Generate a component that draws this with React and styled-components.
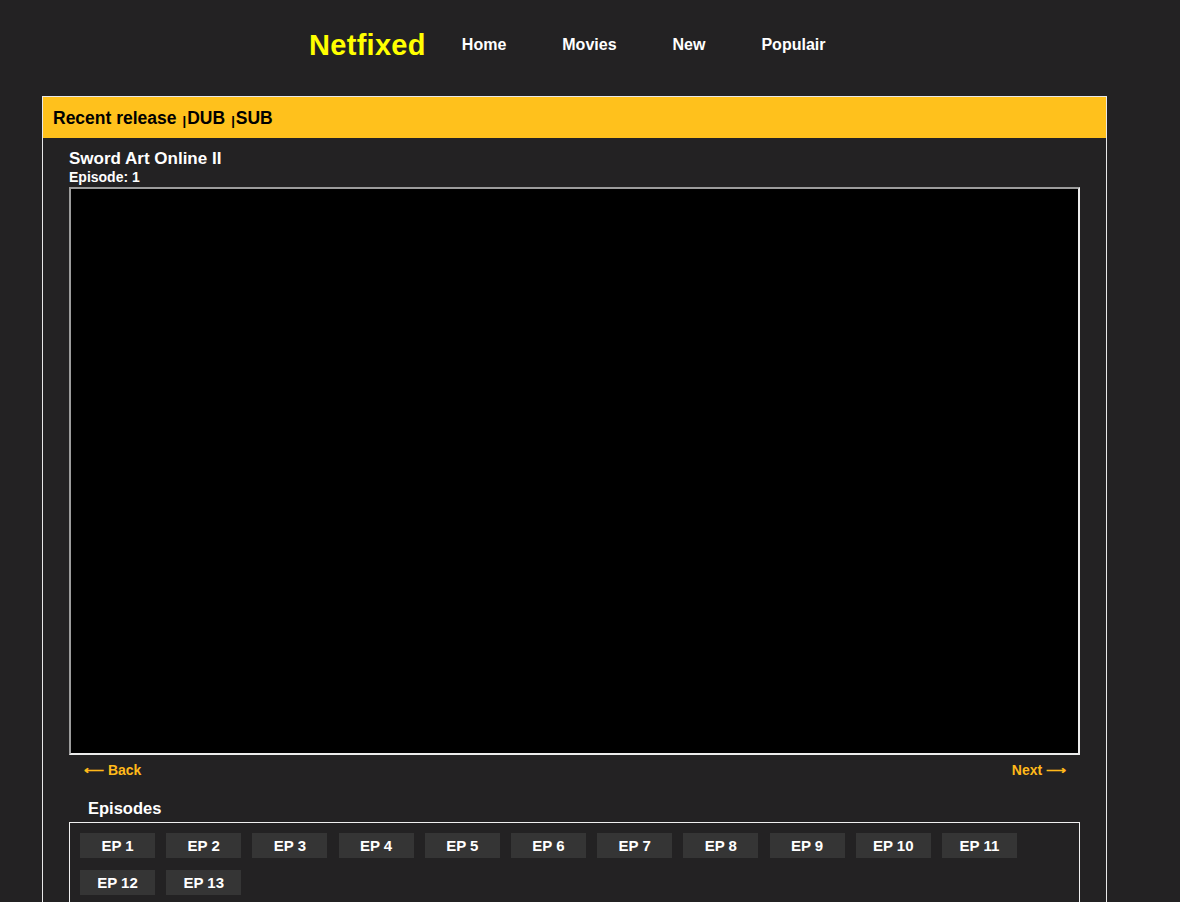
import React from "react";
import styled, { createGlobalStyle } from "styled-components";

const Global = createGlobalStyle`
  html, body { margin: 0; padding: 0; background: #232223; }
  body { font-family: "Liberation Sans", Arial, sans-serif; color: #fff; }
  * { box-sizing: border-box; }
`;

const Header = styled.header`
  display: flex;
  align-items: center;
  height: 90px;
  padding-left: 309px;
`;

const Logo = styled.div`
  color: #ffff00;
  font-size: 29px;
  font-weight: bold;
  margin-right: 36px;
  letter-spacing: 0.3px;
`;

const Nav = styled.nav`
  display: flex;
  gap: 56px;
`;

const NavLink = styled.a`
  color: #fff;
  font-size: 16px;
  font-weight: bold;
  text-decoration: none;
`;

const Panel = styled.section`
  margin: 6px 0 0 42px;
  width: 1065px;
  border: 1px solid #e8e8e8;
  border-bottom: none;
`;

const Bar = styled.div`
  background: #ffc11c;
  height: 41px;
  display: flex;
  align-items: center;
  padding-left: 10px;
  padding-top: 2px;
  color: #000;
  font-size: 17.5px;
  font-weight: bold;
`;

const Pipe = styled.span`
  font-size: 13px;
  margin: 4px 1px 0 6px;
`;

const Body = styled.div`
  padding: 11px 26px 0;
`;

const Title = styled.h2`
  margin: 0;
  font-size: 17px;
  line-height: 20px;
`;

const Sub = styled.div`
  font-size: 14px;
  font-weight: bold;
  line-height: 16px;
  margin-bottom: 2px;
`;

const Video = styled.div`
  height: 568px;
  background: #000;
  border: 2px solid;
  border-color: #9c9c9c #ececec #ececec #9c9c9c;
`;

const Pager = styled.div`
  display: flex;
  justify-content: space-between;
  padding: 7px 14px 0 15px;
  height: 43px;
`;

const PageLink = styled.a`
  color: #ffb91a;
  font-size: 14px;
  font-weight: bold;
  text-decoration: none;
`;

const SectionTitle = styled.h3`
  margin: 0 0 3px 19px;
  font-size: 16.5px;
  line-height: 21px;
`;

const EpBox = styled.div`
  border: 1px solid #f0f0f0;
  border-bottom: none;
  padding: 10px;
  display: flex;
  flex-wrap: wrap;
  gap: 12px 11.2px;
`;

const EpButton = styled.button`
  width: 75px;
  height: 25px;
  border: none;
  background: #353535;
  color: #fff;
  font-family: "Liberation Sans", Arial, sans-serif;
  font-size: 15px;
  font-weight: bold;
  padding: 0;
  cursor: pointer;
`;

export default function App() {
  const eps = Array.from({ length: 13 }, (_, i) => i + 1);
  return (
    <>
      <Global />
      <Header>
        <Logo>Netfixed</Logo>
        <Nav>
          <NavLink href="#">Home</NavLink>
          <NavLink href="#">Movies</NavLink>
          <NavLink href="#">New</NavLink>
          <NavLink href="#">Populair</NavLink>
        </Nav>
      </Header>
      <Panel>
        <Bar>
          Recent release<Pipe>|</Pipe>DUB<Pipe>|</Pipe>SUB
        </Bar>
        <Body>
          <Title>Sword Art Online II</Title>
          <Sub>Episode: 1</Sub>
          <Video />
          <Pager>
            <PageLink href="#">⟵ Back</PageLink>
            <PageLink href="#">Next ⟶</PageLink>
          </Pager>
          <SectionTitle>Episodes</SectionTitle>
          <EpBox>
            {eps.map((n) => (
              <EpButton key={n}>EP {n}</EpButton>
            ))}
          </EpBox>
        </Body>
      </Panel>
    </>
  );
}
